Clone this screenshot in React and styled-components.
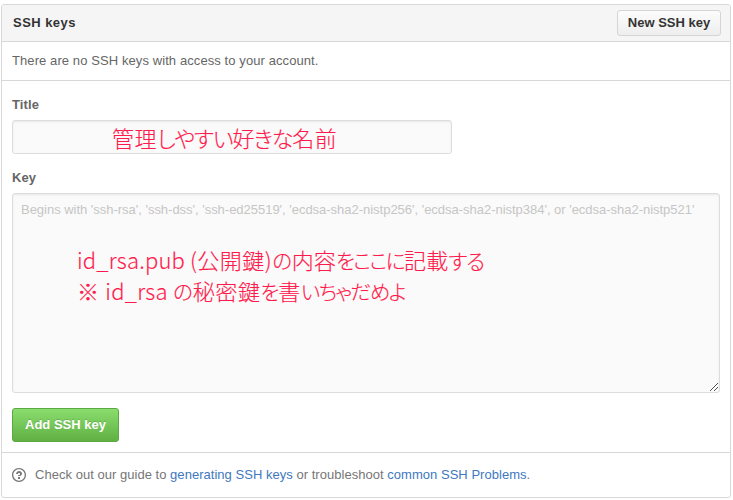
import React from 'react';
import styled, { createGlobalStyle } from 'styled-components';

const GlobalStyle = createGlobalStyle`
  * { box-sizing: border-box; }
  body {
    margin: 0;
    background: #fff;
    color: #666;
    font: 13px/20px 'Liberation Sans', Arial, sans-serif;
    overflow: hidden;
  }
`;

const Panel = styled.section`
  width: 730px;
  height: 494px;
  margin: 4px 0 0 1px;
  border: 1px solid #d8d8d8;
  border-radius: 3px;
  background: #fff;
  overflow: hidden;
  display: flex;
  flex-direction: column;
`;

const Header = styled.header`
  display: flex;
  justify-content: space-between;
  align-items: center;
  height: 37px;
  flex: none;
  padding: 0 9px 0 11px;
  background: #f5f5f5;
  border-bottom: 1px solid #d8d8d8;
`;

const Heading = styled.h2`
  margin: 0;
  font-size: 13px;
  line-height: 20px;
  font-weight: bold;
  letter-spacing: 0.46px;
  color: #333;
  padding-bottom: 1px;
`;

const SmallButton = styled.button`
  width: 104px;
  height: 26px;
  padding: 0;
  border: 1px solid #d5d5d5;
  border-radius: 3px;
  background: linear-gradient(#fcfcfc, #eee);
  color: #333;
  font: bold 13px/20px 'Liberation Sans', Arial, sans-serif;
  white-space: nowrap;
`;

const Notice = styled.p`
  flex: none;
  height: 39px;
  margin: 0;
  padding: 9px 10px;
  border-bottom: 1px solid #d8d8d8;
  letter-spacing: 0.09px;
`;

const Form = styled.form`
  flex: none;
  display: flex;
  flex-direction: column;
  align-items: flex-start;
  height: 372px;
  padding: 14px 10px 0;
  border-bottom: 1px solid #d8d8d8;
`;

const Label = styled.label`
  height: 20px;
  font-weight: bold;
  letter-spacing: 0.1px;
  margin-bottom: 5px;
`;

const Field = styled.div`
  position: relative;
  width: ${(p) => p.$width}px;
  height: ${(p) => p.$height}px;
  margin-bottom: ${(p) => p.$after}px;
  padding: 6px 8px;
  border: 1px solid #ddd;
  border-radius: 3px;
  background: #fafafa;
  box-shadow: inset 0 1px 2px rgba(0, 0, 0, 0.075);
`;

const Placeholder = styled.span`
  color: #c6c6c6;
  letter-spacing: -0.02px;
  white-space: nowrap;
`;

const Note = styled.div`
  position: absolute;
  left: ${(p) => p.$left}px;
  top: ${(p) => p.$top}px;
  color: #ff1a4c;
  font: 300 22px/30px 'Noto Sans CJK JP', sans-serif;
  font-feature-settings: 'palt';
  -webkit-text-stroke: 0.15px #ff1a4c;
  white-space: pre;
`;

const Run = styled.span`
  font-size: ${(p) => p.$size || 22}px;
  letter-spacing: ${(p) => p.$track || 0}px;
`;

const ResizeHandle = styled.svg`
  position: absolute;
  right: 1px;
  bottom: 1px;
`;

const PrimaryButton = styled.button`
  width: 107px;
  height: 34px;
  padding: 0 0 1px;
  border: 1px solid #5ca941;
  border-radius: 3px;
  background: linear-gradient(#8add6d, #60b044);
  color: #fff;
  font: bold 13px/20px 'Liberation Sans', Arial, sans-serif;
  text-shadow: 0 -1px 0 rgba(0, 0, 0, 0.15);
  white-space: nowrap;
`;

const Footer = styled.footer`
  display: flex;
  align-items: center;
  height: 44px;
  padding: 0 10px;
  color: #767676;
`;

const HelpIcon = styled.svg`
  flex: none;
  margin-right: 9px;
`;

const Guide = styled.p`
  margin: 0;
  letter-spacing: 0.03px;
  white-space: pre;
`;

const Link = styled.a`
  color: #4078c0;
  text-decoration: none;
`;

export default function App() {
  return (
    <>
      <GlobalStyle />
      <Panel>
        <Header>
          <Heading>SSH keys</Heading>
          <SmallButton>New SSH key</SmallButton>
        </Header>
        <Notice>There are no SSH keys with access to your account.</Notice>
        <Form onSubmit={(e) => e.preventDefault()}>
          <Label>Title</Label>
          <Field $width={440} $height={34} $after={14}>
            <Note $left={99} $top={1}>
              <Run $track={0.6}>管理</Run>
              <Run $track={-1.1}>しやすい</Run>
              <Run $track={-1}>好きな</Run>
              <Run $track={0.4}>名前</Run>
            </Note>
          </Field>
          <Label>Key</Label>
          <Field $width={708} $height={200} $after={15}>
            <Placeholder>
              Begins with 'ssh-rsa', 'ssh-dss', 'ssh-ed25519', 'ecdsa-sha2-nistp256', 'ecdsa-sha2-nistp384', or 'ecdsa-sha2-nistp521'
            </Placeholder>
            <Note $left={64} $top={50}>
              <Run $track={0.2}>id_rsa.pub (</Run>
              <Run $track={0.5}>公開鍵)</Run>
              <Run $size={20.5} $track={-0.3}>の</Run>
              <Run $track={0.1}>内容</Run>
              <Run $size={20.5} $track={-1.5}>をここに</Run>
              <Run $track={0.2}>記載</Run>
              <Run $size={21} $track={-1.2}>する</Run>
            </Note>
            <Note $left={64} $top={81}>
              <Run $track={1.2}>※</Run>
              <Run $track={0.25}> id_rsa </Run>
              <Run $size={20.5} $track={0}>の</Run>
              <Run $track={0.6}>秘密鍵</Run>
              <Run $size={20.5} $track={-1.2}>を</Run>
              <Run $track={0.6}>書</Run>
              <Run $size={20.5} $track={-1.5}>いちゃだめよ</Run>
            </Note>
            <ResizeHandle width="8" height="8" viewBox="0 0 8 8" shapeRendering="crispEdges">
              <path
                fill="#555"
                d="M7 0h1v1h-1zM6 1h1v1h-1zM5 2h1v1h-1zM4 3h1v1h-1zM3 4h1v1h-1zM2 5h1v1h-1zM1 6h1v1h-1zM0 7h1v1h-1zM7 4h1v1h-1zM6 5h1v1h-1zM5 6h1v1h-1zM4 7h1v1h-1z"
              />
            </ResizeHandle>
          </Field>
          <PrimaryButton>Add SSH key</PrimaryButton>
        </Form>
        <Footer>
          <HelpIcon width="14" height="16" viewBox="0 0 14 16">
            <path
              fill="#767676"
              fillRule="evenodd"
              d="M6 10h2v2H6v-2zm4-3.5C10 8.64 8 9 8 9H6c0-.55.45-1 1-1h.5c.28 0 .5-.22.5-.5v-1c0-.28-.22-.5-.5-.5h-1c-.28 0-.5.22-.5.5V7H4c0-1.5 1.5-3 3-3s3 1 3 2.5zM7 2.3c3.14 0 5.7 2.56 5.7 5.7s-2.56 5.7-5.7 5.7A5.71 5.71 0 0 1 1.3 8c0-3.14 2.56-5.7 5.7-5.7zM7 1C3.14 1 0 4.14 0 8s3.14 7 7 7 7-3.14 7-7-3.14-7-7-7z"
            />
          </HelpIcon>
          <Guide>
            Check out our guide to <Link>generating SSH keys</Link> or troubleshoot <Link>common SSH Problems</Link>.
          </Guide>
        </Footer>
      </Panel>
    </>
  );
}
